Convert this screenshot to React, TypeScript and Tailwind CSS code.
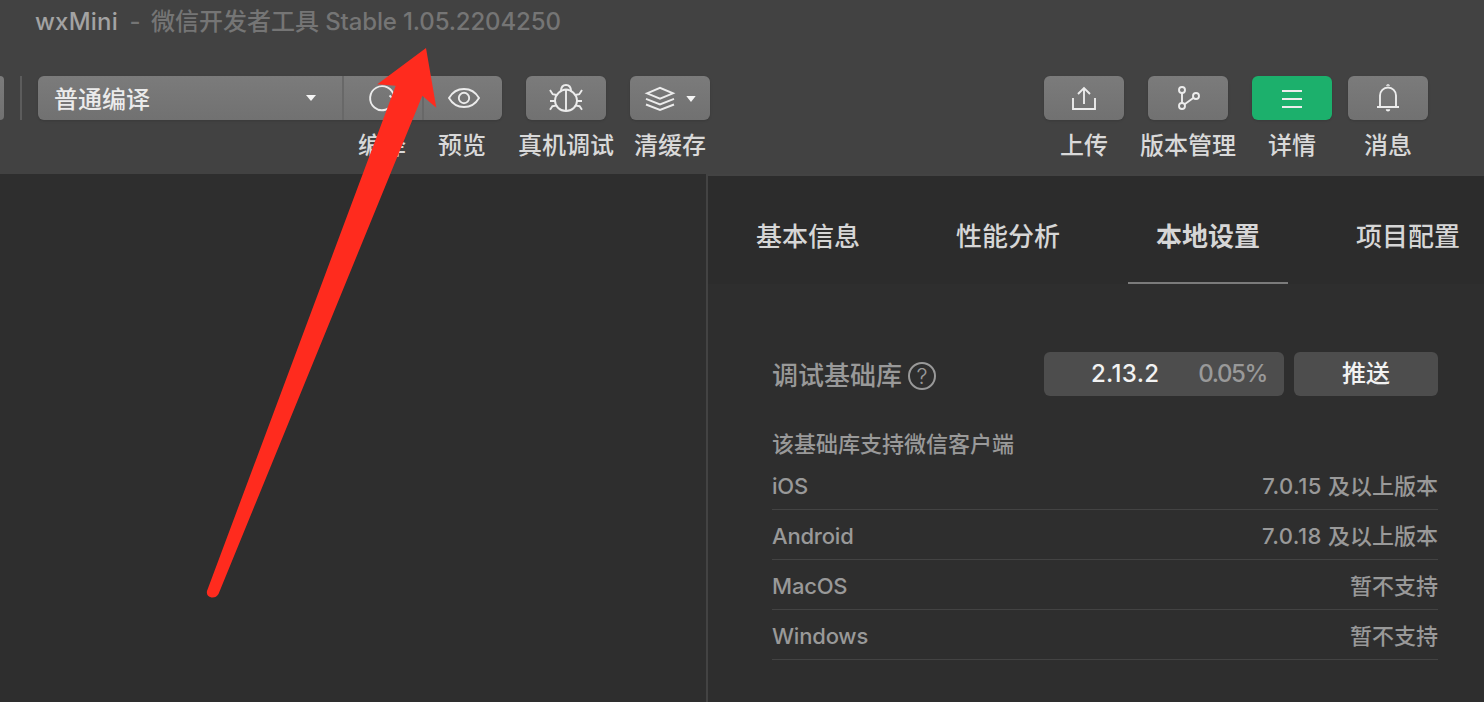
import React from "react";

interface ToolButtonProps {
  label: string;
  active?: boolean;
  children: React.ReactNode;
}
const ToolButton: React.FunctionComponent<ToolButtonProps> = ({
  label,
  active = false,
  children,
}) => (
  <div className="flex w-20 flex-col items-center">
    <button
      className={`h-11 w-20 rounded-[6px] shadow-sm ${
        active ? "bg-[#1cb06c]" : "bg-linear-to-b from-[#7b7b7b] to-[#717171]"
      }`}
      type="button"
    >
      {children}
    </button>
    <ToolLabel>{label}</ToolLabel>
  </div>
);

const ToolLabel: React.FunctionComponent<{ children: React.ReactNode }> = ({
  children,
}) => (
  <span className="mt-2 text-2xl leading-9 whitespace-nowrap text-[#d9d9d9]">
    {children}
  </span>
);

interface IconProps {
  children: React.ReactNode;
}
// every toolbar icon is drawn on the full 80x44 button surface
const Icon: React.FunctionComponent<IconProps> = ({ children }) => (
  <svg
    className="block max-w-none"
    fill="none"
    height="44"
    stroke="#ececec"
    strokeWidth="1.9"
    viewBox="0 0 80 44"
    width="80"
  >
    {children}
  </svg>
);

const RefreshIcon = () => (
  <Icon>
    <path d="M49.5 26A12 12 0 1 1 50 20.5" />
    <path d="M45.5 19.5l4.6 4 3.4-4.8" />
  </Icon>
);

const EyeIcon = () => (
  <Icon>
    <path d="M25 22C28.5 16 34 13 40 13s11.5 3 15 9c-3.5 6-9 9-15 9s-11.5-3-15-9Z" />
    <circle cx="40" cy="22" r="5.2" />
  </Icon>
);

const BugIcon = () => (
  <Icon>
    <path d="M40 13.5C45 13.5 51 18.5 51 24.5S46 35 40 35s-11-4.5-11-10.5S35 13.5 40 13.5Z" />
    <path d="M34.8 15.5C35 11.5 37 9 40 9s5 2.5 5.2 6.5M40 13v22" />
    <path d="M24 14l2.7 4.2 4 .8M24 25h5M24 33.7l2.4-3.5 3.6-.6" />
    <path d="M56 14l-2.7 4.2-4 .8M56 25h-5M56 33.7l-2.4-3.5-3.6-.6" />
  </Icon>
);

const LayersIcon = () => (
  <Icon>
    <path d="M17 17.3L30 11.9l13 5.4L30 22.7Z" />
    <path d="M16 22.8l14 5.7 14-5.7M16 28.5l14 5.5 14-5.5" />
    <path d="M56.3 20h9.4L61 26Z" fill="#f5f5f5" stroke="none" />
  </Icon>
);

const UploadIcon = () => (
  <Icon>
    <path d="M29 22v11h22V22M40 28V12M34 18l6-6 6 6" />
  </Icon>
);

const BranchIcon = () => (
  <Icon>
    <circle cx="34" cy="14" r="3" />
    <circle cx="34" cy="30" r="3" />
    <circle cx="48" cy="20" r="3" />
    <path d="M34 17v10M36.6 28.3l9-6.5" />
  </Icon>
);

const MenuIcon = () => (
  <Icon>
    <path d="M30 15h20M30 23h20M30 31h20" />
  </Icon>
);

const BellIcon = () => (
  <Icon>
    <path d="M32 31V19.5a8 8 0 0 1 16 0V31M29 31h22" />
    <path d="M38 9.8c.5-2 3.5-2 4 0Z" fill="#f0f0f0" stroke="none" />
    <path d="M37.8 33.3h4.4c0 3-4.4 3-4.4 0Z" fill="#f0f0f0" stroke="none" />
  </Icon>
);

const Toolbar = () => (
  <div className="flex h-[98px] items-start">
    <div className="h-11 w-1 rounded-r-[4px] bg-linear-to-b from-[#7b7b7b] to-[#717171]" />
    <div className="ml-4 h-11 w-0.5 bg-[#5c5c5c]" />
    <div className="ml-4 h-11 w-[464px] rounded-[6px] bg-linear-to-b from-[#7b7b7b] to-[#717171] shadow-sm">
      <div className="flex">
        <button
          className="flex h-11 w-[304px] items-center justify-between pl-4 text-2xl text-[#ebebeb]"
          type="button"
        >
          <span className="pt-1">普通编译</span>
          <svg className="mr-[26px]" height="6" viewBox="0 0 10 6" width="10">
            <path d="M0 0h10L5 6Z" fill="#f5f5f5" />
          </svg>
        </button>
        <div className="h-11 w-0.5 bg-[#686868]" />
        <div className="mr-0.5 flex w-19 flex-col items-center">
          <button className="self-start" type="button">
            <RefreshIcon />
          </button>
          <ToolLabel>编译</ToolLabel>
        </div>
        <div className="h-11 w-0.5 bg-[#686868]" />
        <div className="mr-0.5 flex w-19 flex-col items-center">
          <button className="self-start" type="button">
            <EyeIcon />
          </button>
          <ToolLabel>预览</ToolLabel>
        </div>
      </div>
    </div>
    <div className="ml-6 flex gap-6">
      <ToolButton label="真机调试">
        <BugIcon />
      </ToolButton>
      <ToolButton label="清缓存">
        <LayersIcon />
      </ToolButton>
    </div>
    <div className="mr-14 ml-auto flex gap-6">
      <ToolButton label="上传">
        <UploadIcon />
      </ToolButton>
      <ToolButton label="版本管理">
        <BranchIcon />
      </ToolButton>
      <div className="flex gap-4">
        <ToolButton active label="详情">
          <MenuIcon />
        </ToolButton>
        <ToolButton label="消息">
          <BellIcon />
        </ToolButton>
      </div>
    </div>
  </div>
);

const tabs = ["基本信息", "性能分析", "本地设置", "项目配置"];
const activeTab = "本地设置";

const platforms = [
  { name: "iOS", version: "7.0.15", support: "及以上版本" },
  { name: "Android", version: "7.0.18", support: "及以上版本" },
  { name: "MacOS", support: "暂不支持" },
  { name: "Windows", support: "暂不支持" },
];

const DetailsPanel = () => (
  <div className="w-[778px] overflow-hidden border-t-2 border-l-2 border-[#434343] bg-[#2e2e2e]">
    <div className="flex h-[108px] w-[800px] bg-[#2c2c2c] text-[26px] text-[#d6d6d6]">
      {tabs.map((tab) => (
        <div
          className={`mx-5 flex w-40 items-center justify-center border-b-2 pt-3.5 ${
            tab === activeTab
              ? "border-[#7b7b7b] font-bold"
              : "border-transparent"
          }`}
          key={tab}
        >
          {tab}
        </div>
      ))}
    </div>
    <div className="mt-[68px] ml-16 w-[666px] text-[#999999]">
      <div className="flex h-11 items-center">
        <span className="pt-0.5 text-[26px]">调试基础库</span>
        <span className="mt-1 ml-1.5 flex h-7 w-7 items-center justify-center rounded-full border-2 border-[#999999] text-[22px] leading-none font-light">
          ?
        </span>
        <div className="ml-auto flex h-11 w-60 items-center justify-end rounded-[6px] bg-[#4d4d4d] pr-[17px] text-2xl">
          <span className="tracking-[0.3px] text-[#f2f2f2]">2.13.2</span>
          <span className="ml-[39px] tracking-[-1.4px]">0.05%</span>
        </div>
        <button
          className="ml-2.5 h-11 w-36 rounded-[6px] bg-[#4d4d4d] text-2xl text-[#f2f2f2]"
          type="button"
        >
          推送
        </button>
      </div>
      <div className="mt-8 h-8 text-[22px] leading-8">该基础库支持微信客户端</div>
      {platforms.map((platform) => (
        <div
          className="flex h-[50px] items-center justify-between border-b border-[#434343] pt-1 text-[22px]"
          key={platform.name}
        >
          <span className="tracking-[-0.2px]">{platform.name}</span>
          <span>
            {platform.version ? (
              <span className="tracking-[0.4px]">{platform.version} </span>
            ) : null}
            {platform.support}
          </span>
        </div>
      ))}
    </div>
  </div>
);

const Arrow = () => (
  <svg
    className="pointer-events-none absolute top-0 left-0"
    height="702"
    viewBox="0 0 500 702"
    width="500"
  >
    <path
      d="M426 48L436.3 107.7L422.3 95.7L218.5 594Q216 598 211.5 597.5Q206 596 207 591L395.7 85.7L377.3 84.3Z"
      fill="#ff2b1e"
    />
  </svg>
);

export default function App() {
  return (
    <div className="relative flex h-[702px] w-[1484px] flex-col overflow-hidden bg-[#424242] font-['Inter','Noto_Sans_CJK_SC',sans-serif] font-medium">
      <div className="flex h-[76px] items-start pt-1 pl-[35px] text-2xl leading-9 whitespace-pre text-[#757575]">
        <span className="w-[84px] tracking-[0.2px] text-[#a3a3a3]">wxMini</span>
        <span className="w-8 text-center">-</span>
        <span>
          微信开发者工具
          <span className="tracking-[-0.15px]"> Stable 1.05.2204250</span>
        </span>
      </div>
      <Toolbar />
      <div className="flex flex-1">
        <div className="flex-1 bg-[#2e2e2e]" />
        <DetailsPanel />
      </div>
      <Arrow />
    </div>
  );
}
